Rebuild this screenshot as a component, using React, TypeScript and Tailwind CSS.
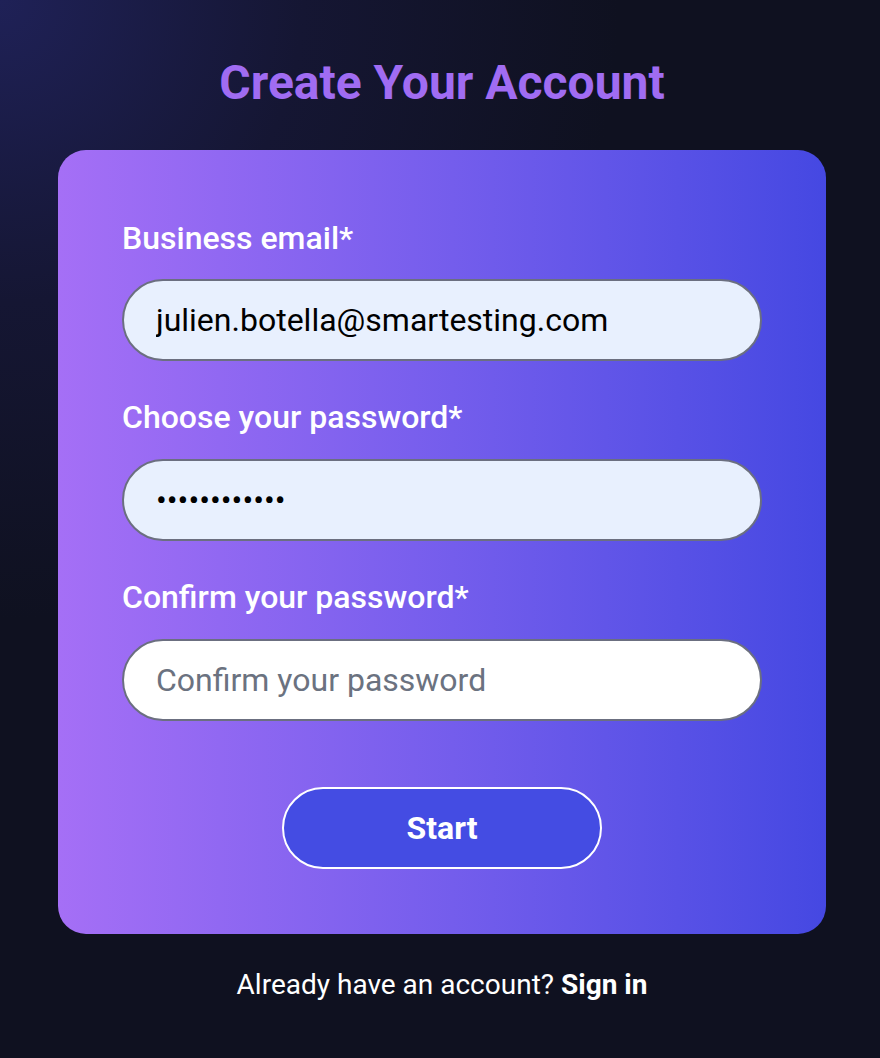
import { useState } from 'react'

export default function App() {
  const [email, setEmail] = useState('julien.botella@smartesting.com')
  const [password, setPassword] = useState('............')
  const [confirm, setConfirm] = useState('')

  return (
    <div
      className="min-h-[1058px] w-full bg-[#0f1120] bg-[radial-gradient(circle_at_0%_0%,#1f2157_0%,#151633_22%,#0f1120_45%)] flex flex-col items-center pt-[55px] pl-1"
      style={{ fontFamily: 'Roboto, "Open Sans", sans-serif' }}
    >
      <h1 className="text-[48px] leading-[56px] font-bold text-[#a06cf2]">Create Your Account</h1>

      <form
        className="mt-[39px] w-[768px] rounded-[28px] bg-gradient-to-r from-[#a56ff6] to-[#4548e2] px-16 pt-16 pb-[65px] flex flex-col"
        onSubmit={e => e.preventDefault()}
      >
        {/* Email */}
        <label className="text-[32px] leading-[48px] font-medium text-white">Business email*</label>
        <input
          type="email"
          value={email}
          onChange={e => setEmail(e.target.value)}
          className="mt-[17px] h-[82px] w-full rounded-full border-2 border-[#6b6f80] bg-[#e8f0fe] px-8 text-[32px] text-black outline-none"
        />

        {/* Password */}
        <label className="mt-8 text-[32px] leading-[48px] font-medium text-white">Choose your password*</label>
        <input
          type="password"
          value={password}
          onChange={e => setPassword(e.target.value)}
          className="mt-[18px] h-[82px] w-full rounded-full border-2 border-[#6b6f80] bg-[#e8f0fe] px-8 text-[32px] text-black outline-none"
        />

        {/* Confirm */}
        <label className="mt-8 text-[32px] leading-[48px] font-medium text-white">Confirm your password*</label>
        <input
          type="password"
          value={confirm}
          onChange={e => setConfirm(e.target.value)}
          placeholder="Confirm your password"
          className="mt-[18px] h-[82px] w-full rounded-full border-2 border-[#6b6f80] bg-white px-8 text-[32px] text-black placeholder:text-[#6b7280] outline-none"
        />

        <button
          type="submit"
          className="mt-[66px] self-center h-[82px] w-[320px] rounded-full border-2 border-white bg-[#444ce3] text-[32px] font-bold text-white"
        >
          Start
        </button>
      </form>

      <p className="mt-[33px] text-[28px] leading-9 text-white">
        Already have an account? <a href="#" className="font-bold">Sign in</a>
      </p>
    </div>
  )
}
